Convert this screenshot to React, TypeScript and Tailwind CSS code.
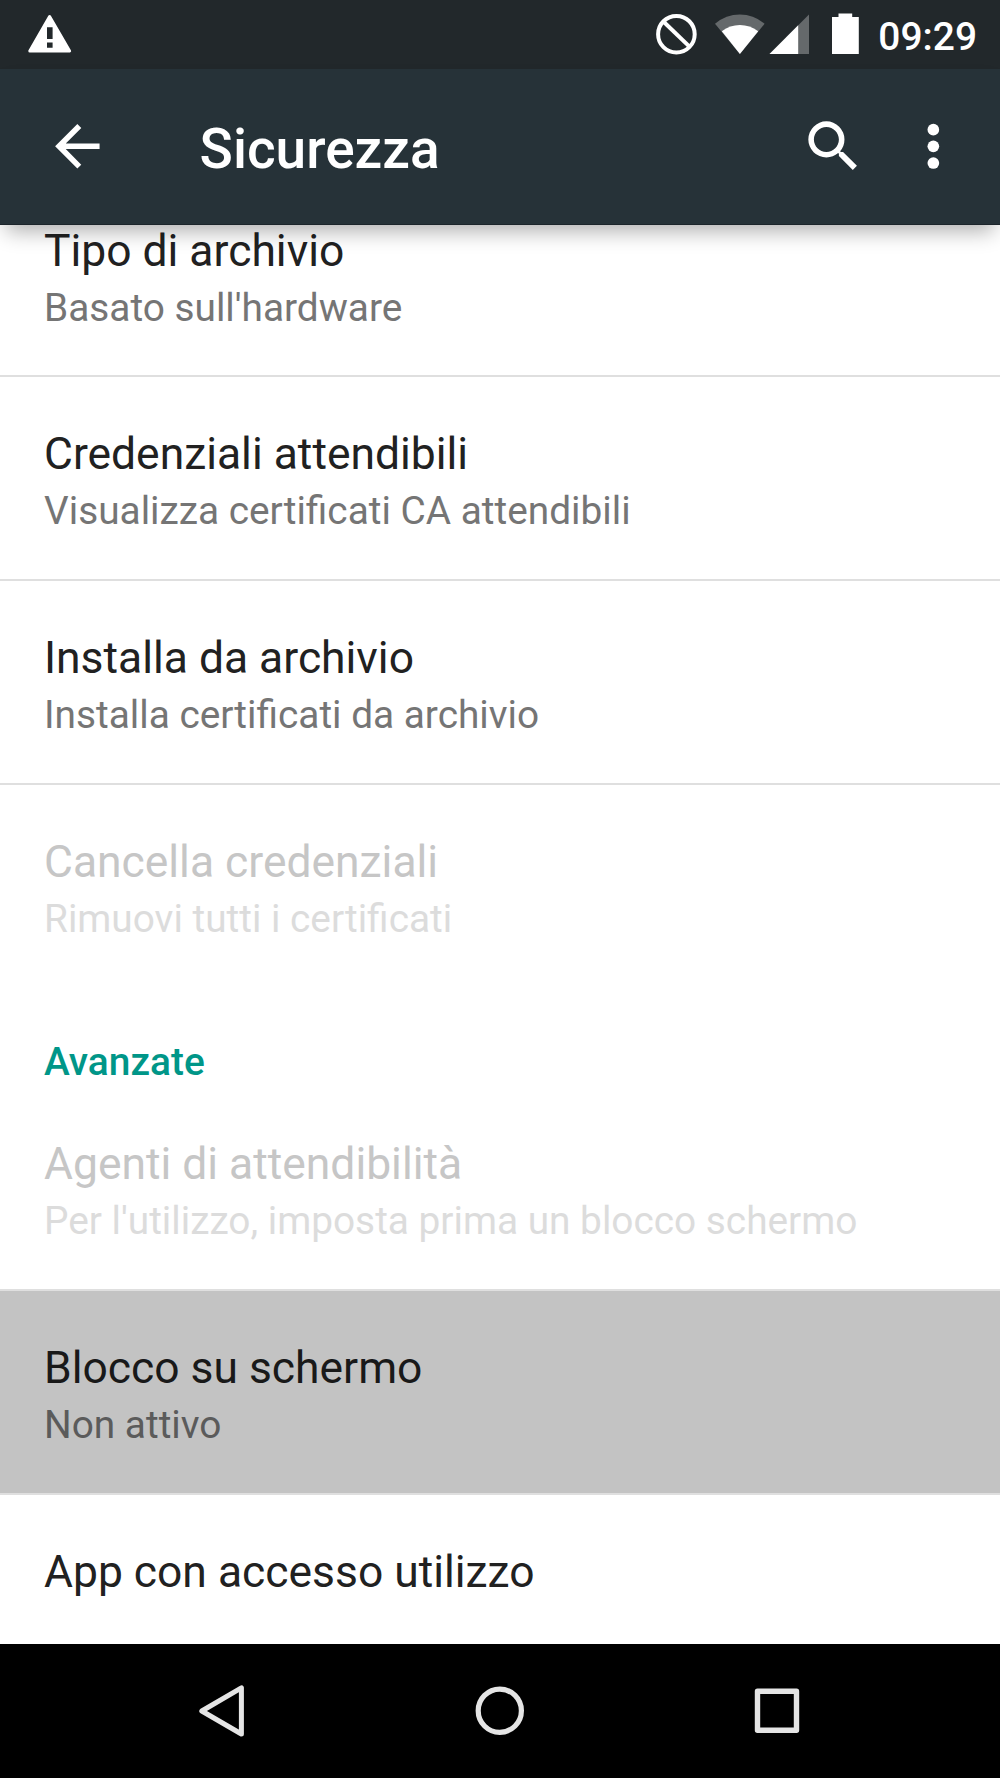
import type { ReactNode } from "react"

type Setting = {
  title: string
  summary?: string
  disabled?: boolean
  pressed?: boolean
  divider?: boolean
}

const credentials: Setting[] = [
  { title: "Tipo di archivio", summary: "Basato sull'hardware", divider: true },
  { title: "Credenziali attendibili", summary: "Visualizza certificati CA attendibili", divider: true },
  { title: "Installa da archivio", summary: "Installa certificati da archivio", divider: true },
  { title: "Cancella credenziali", summary: "Rimuovi tutti i certificati", disabled: true },
]

const advanced: Setting[] = [
  { title: "Agenti di attendibilità", summary: "Per l'utilizzo, imposta prima un blocco schermo", disabled: true, divider: true },
  { title: "Blocco su schermo", summary: "Non attivo", pressed: true, divider: true },
  { title: "App con accesso utilizzo" },
]

function StatusBar() {
  return (
    <div className="flex h-[69px] shrink-0 items-start justify-between bg-[#22282b] pl-7 pr-[23px] text-white">
      <svg width="44" height="69" viewBox="28 0 44 69" fill="none">
        <path d="M49.6 16.5 69.6 51H29.8Z" fill="white" stroke="white" strokeWidth="3" strokeLinejoin="round" />
        <path d="M47 27.3h5.6v11.8H47zM47 42.5h5.6v5.2H47z" fill="#22282b" />
      </svg>

      <div className="flex">
        <svg width="204" height="69" viewBox="656 0 204 69" fill="none">
          {/* No interruptions */}
          <circle cx="676.4" cy="34.2" r="18.3" stroke="white" strokeWidth="4" />
          <path d="m663.6 21.8 25.6 24.6" stroke="white" strokeWidth="4" />
          {/* Wi-Fi */}
          <path d="M739.9 54 715 23.8Q726 14.6 739.9 14.6T764.6 23.8Z" fill="#65696b" />
          <path d="M739.9 54 721.8 31.2Q730 25 739.9 25T758.2 31.2Z" fill="white" />
          {/* Signal */}
          <path d="M769.5 54 809 14.5V54Z" fill="#65696b" />
          <path d="M769.5 54 798.2 25.3V54Z" fill="white" />
          {/* Battery */}
          <path d="M832 17h6.5v-3.5h13.7V17h6.6v37H832Z" fill="white" />
        </svg>
        <span className="ml-[18px] mt-[13.5px] text-[38.9px] leading-[46px] font-medium">09:29</span>
      </div>
    </div>
  )
}

function IconButton({ label, children }: { label: string; children: ReactNode }) {
  return (
    <button aria-label={label} className="size-[66.7px]">
      <svg width="66.7" height="66.7" viewBox="0 0 24 24" fill="white">
        {children}
      </svg>
    </button>
  )
}

function AppBar() {
  return (
    <header className="relative z-10 flex h-[155.5px] shrink-0 items-center border-b border-[#1c252b] bg-[#263238] pt-px pl-[44.4px] pr-[33.5px] text-white shadow-[0_12px_20px_-6px_rgba(0,0,0,0.32)]">
      <IconButton label="Indietro">
        <path d="M20 11H7.83l5.59-5.59L12 4l-8 8 8 8 1.41-1.41L7.83 13H20v-2z" />
      </IconButton>
      <h1 className="mt-[3.5px] ml-[88.5px] flex-1 text-[55px] leading-[66px] font-medium">Sicurezza</h1>
      <div className="flex gap-[33.3px]">
        <IconButton label="Cerca">
          <path d="M15.5 14h-.79l-.28-.27A6.471 6.471 0 0 0 16 9.5 6.5 6.5 0 1 0 9.5 16c1.61 0 3.09-.59 4.23-1.57l.27.28v.79l5 4.99L20.49 19l-4.99-5zm-6 0C7.01 14 5 11.99 5 9.5S7.01 5 9.5 5 14 7.01 14 9.5 11.99 14 9.5 14z" />
        </IconButton>
        <IconButton label="Altre opzioni">
          <circle cx="12" cy="6" r="2.1" />
          <circle cx="12" cy="12" r="2.1" />
          <circle cx="12" cy="18" r="2.1" />
        </IconButton>
      </div>
    </header>
  )
}

function SettingRow({ title, summary, disabled, pressed, divider }: Setting) {
  const titleColor = disabled ? "text-[#c6c6c6]" : pressed ? "text-[#191919]" : "text-[#212121]"
  const summaryColor = disabled ? "text-[#dcdcdc]" : pressed ? "text-[#5b5b5b]" : "text-[#757575]"

  return (
    <li
      className={`h-[203.7px] shrink-0 px-[44px] pt-12 ${pressed ? "bg-[#c3c3c3]" : ""} ${
        divider ? "border-b-2 border-[#dfdfdf]" : ""
      }`}
    >
      <p className={`text-[44.4px] leading-[59px] ${titleColor}`}>{title}</p>
      {summary && <p className={`text-[38.8px] leading-[53px] ${summaryColor}`}>{summary}</p>}
    </li>
  )
}

function NavBar() {
  return (
    <nav className="flex h-[134px] shrink-0 items-center justify-between bg-black pl-[194px] pr-[195px]">
      <svg width="56" height="56" viewBox="0 0 56 56" fill="none" stroke="#e5e5e5" strokeWidth="5" strokeLinejoin="round">
        <path d="M47.4 4.8V51L7.8 28Z" />
      </svg>
      <svg width="56" height="56" viewBox="0 0 56 56" fill="none" stroke="#e5e5e5" strokeWidth="5.2">
        <circle cx="27.8" cy="27.7" r="21.6" />
      </svg>
      <svg width="56" height="56" viewBox="0 0 56 56" fill="none" stroke="#e5e5e5" strokeWidth="5.4" strokeLinejoin="round">
        <path d="M8.5 8.2h39v39h-39z" />
      </svg>
    </nav>
  )
}

export default function App() {
  return (
    <div className="flex h-[1778px] w-[1000px] flex-col overflow-hidden bg-white font-['Roboto',sans-serif]">
      <StatusBar />
      <AppBar />
      <main className="min-h-0 flex-1 overflow-hidden bg-white">
        <ul className="-mt-[51px]">
          {credentials.map((item) => (
            <SettingRow key={item.title} {...item} />
          ))}
        </ul>
        <h2 className="h-[99.2px] px-[44px] pt-[51px] text-[38.89px] leading-[46px] font-medium text-[#009688]">
          Avanzate
        </h2>
        <ul>
          {advanced.map((item) => (
            <SettingRow key={item.title} {...item} />
          ))}
        </ul>
      </main>
      <NavBar />
    </div>
  )
}
